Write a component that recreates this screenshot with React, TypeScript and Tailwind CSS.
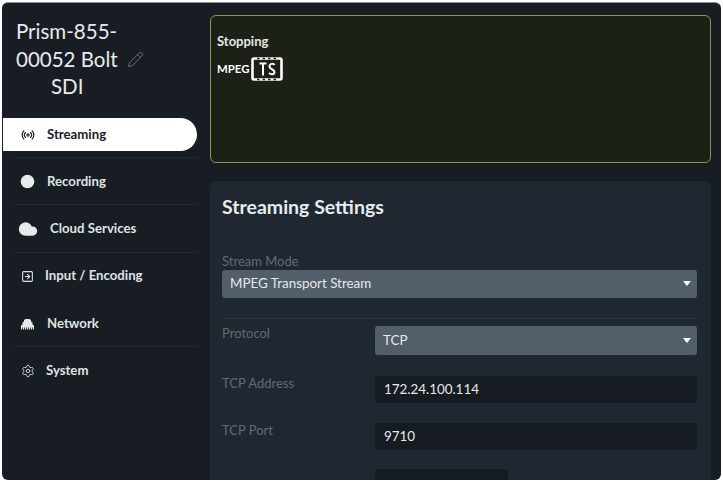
import { Pencil, Radio, Circle, Cloud, SquareArrowRight, Settings } from "lucide-react";

const font = "font-['Lato','Liberation_Sans',sans-serif]";

function NavItem({ icon, label, active, line, gap }: { icon: React.ReactNode; label: string; active?: boolean; line?: boolean; gap: string }) {
  return (
    <div className="h-[47.3px] pt-[7px]">
      <div
        className={`h-[33px] ml-px flex items-center pl-[17px] ${gap} rounded-r-full text-[13.2px] font-bold ${
          active ? "bg-white text-[#1a2027]" : "text-[#dfe2e4]"
        }`}
      >
        <span className="w-[15px] flex justify-center">{icon}</span>
        {label}
      </div>
      {line && <div className="mt-[6px] ml-[13px] h-px bg-[#232a31]" />}
    </div>
  );
}

function Network() {
  return (
    <svg width="15" height="12" viewBox="0 0 15 12" fill="#e4e6e8">
      <path d="M1 11.5V7.5L2.5 6.5V4.5L4 3.5V2L5.5 1H9.5L11 2V3.5L12.5 4.5V6.5L14 7.5V11.5H12.8V9.5H12V11.5H10.8V9.5H10V11.5H8.8V9.5H8V11.5H6.8V9.5H6V11.5H4.8V9.5H4V11.5H2.8V9.5H2V11.5Z" />
    </svg>
  );
}

function Caret() {
  return <span className="w-0 h-0 border-x-[4px] border-x-transparent border-t-[5px] border-t-white" />;
}

function Field({ label, value, top }: { label: string; value: string; top: string }) {
  return (
    <div className={`flex ${top}`}>
      <div className="w-[153px] mt-[-1px] text-[13px] text-[#5f6b75] leading-4">{label}</div>
      <div className="flex-1 h-[27px] rounded-[3px] bg-[#161b21] flex items-center px-[9px] pb-[1px] text-[13.4px] text-[#e6e8ea]">{value}</div>
    </div>
  );
}

export default function App() {
  return (
    <div className={`w-[723px] h-[483px] bg-white p-[2px] pb-[3px] overflow-hidden ${font}`}>
      <div className="h-full flex rounded-md overflow-hidden bg-[#181d23] border-t border-[#8d9196]">
        <div className="w-[205px] shrink-0 pt-[15px] pr-[10px]">
          <div className="h-[88px] pl-[14px] text-[20.5px] leading-[27.5px] text-[#e8eaec]">
            <div>Prism-855-</div>
            <div className="flex items-center gap-[9px]">
              00052 Bolt
              <Pencil size={17} strokeWidth={1.1} className="text-[#7d858c]" />
            </div>
            <div className="pl-[35px]">SDI</div>
          </div>
          <div className="mt-[5px]">
            <NavItem icon={<Radio size={14} />} label="Streaming" active line gap="gap-[12px]" />
            <NavItem icon={<Circle size={13} fill="#e8eaec" strokeWidth={0} className="scale-125" />} label="Recording" line gap="gap-[12px]" />
            <NavItem icon={<Cloud size={20} fill="#e8eaec" color="#e8eaec" strokeWidth={2} className="shrink-0" />} label="Cloud Services" line gap="gap-[15px]" />
            <NavItem icon={<SquareArrowRight size={13} />} label="Input / Encoding" gap="gap-[10px]" />
            <NavItem icon={<Network />} label="Network" line gap="gap-[12px]" />
            <NavItem icon={<Settings size={14} strokeWidth={1.5} />} label="System" gap="gap-[11px]" />
          </div>
        </div>
        <div className="flex-1 pt-[12px] pl-[3px] pr-[10px] min-w-0">
          <div className="h-[148px] rounded-md border border-[#7f9f44] bg-[#1c2118] pt-[17px] pl-[6px]">
            <div className="text-[13px] font-bold text-[#e6e8e2] leading-4">Stopping</div>
            <div className="mt-[8px] flex items-center gap-[2px] text-[11.4px] font-bold text-white">
              MPEG
              <svg width="32" height="24" viewBox="0 0 32 24" fill="none" stroke="white">
                <rect x="1.5" y="1.5" width="29" height="21" rx="1.5" strokeWidth="2.6" />
                <path d="M6 1.5h20M6 22.5h20" stroke="#1c2118" strokeWidth="1.4" strokeDasharray="2.5 3" />
                <path d="M8.5 6.5h7M12 6.5v12M23.5 8c-1-2-5-1.5-5 1.5s5 2.5 5 5.5-4 2.5-5.5 1" strokeWidth="2" />
              </svg>
            </div>
          </div>
          <div className="mt-[18px] h-[320px] rounded-t-md bg-[#1f2831] pt-[14px] pl-[12px] pr-[14px]">
            <div className="text-[19.5px] font-bold leading-[24px] text-[#e9ebed]">Streaming Settings</div>
            <div className="mt-[34px] text-[13px] leading-4 text-[#5f6b75]">Stream Mode</div>
            <div className="mt-[1px] h-[28px] rounded-[3px] bg-[#525e6a] flex items-center justify-between pl-[8px] pr-[6px] pb-[1px] text-[13.4px] text-[#e6e8ea]">
              MPEG Transport Stream
              <Caret />
            </div>
            <div className="mt-[20px] border-t border-[#2c353e] pt-[7px] flex">
              <div className="w-[153px] mt-[-1px] text-[13px] leading-4 text-[#5f6b75]">Protocol</div>
              <div className="flex-1 h-[29px] rounded-[3px] bg-[#525e6a] flex items-center justify-between pl-[8px] pr-[6px] pb-[1px] text-[13.4px] text-[#e6e8ea]">
                TCP
                <Caret />
              </div>
            </div>
            <Field label="TCP Address" value="172.24.100.114" top="mt-[21px]" />
            <Field label="TCP Port" value="9710" top="mt-[20px]" />
            <div className="mt-[19px] flex">
              <div className="w-[153px] pt-[9px] text-[13px] leading-4 text-[#5f6b75]">Selective Object</div>
              <div className="w-[133px] h-[27px] rounded-[3px] bg-[#161b21]" />
            </div>
          </div>
        </div>
      </div>
    </div>
  );
}
